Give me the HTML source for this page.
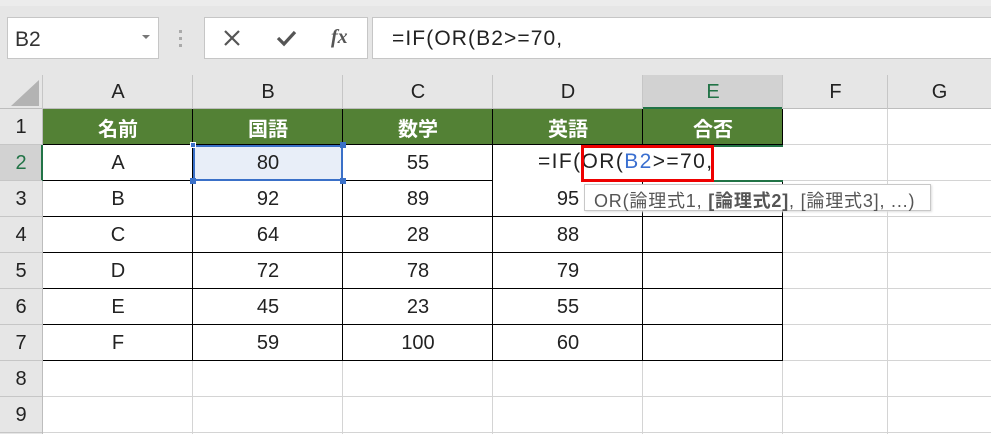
<!DOCTYPE html>
<html><head><meta charset="utf-8"><style>
*{margin:0;padding:0;box-sizing:border-box}
body{width:991px;height:434px;overflow:hidden;background:#fff;font-family:"Liberation Sans","Noto Sans CJK JP",sans-serif;position:relative}
.a{position:absolute}
.c{position:absolute;display:flex;align-items:center;justify-content:center;font-size:20px;color:#222}
.g{background:#d4d4d4}
.k{background:#000}
</style></head><body>
<div class="a" style="left:0;top:0;width:991px;height:75px;background:#e6e6e6"></div>
<div class="a" style="left:0;top:0;width:991px;height:6px;background:#ececec"></div>
<div class="a" style="left:7px;top:17px;width:152px;height:42px;background:#fff;border:1px solid #c6c6c6"></div>
<div class="a" style="left:15px;top:28px;font-size:21px;color:#333">B2</div>
<div class="a" style="left:142px;top:35px;width:0;height:0;border-left:4px solid transparent;border-right:4px solid transparent;border-top:4px solid #777"></div>
<div class="a" style="left:179px;top:30px;width:3px;height:3px;background:#aaa;box-shadow:0 7px 0 #aaa,0 14px 0 #aaa"></div>
<div class="a" style="left:204px;top:17px;width:164px;height:42px;background:#fff;border:1px solid #c6c6c6"></div>
<svg class="a" style="left:222px;top:28px" width="20" height="20"><path d="M3 3L17 17M17 3L3 17" stroke="#555" stroke-width="2.2"/></svg>
<svg class="a" style="left:275px;top:28px" width="24" height="20"><path d="M3 10L9 16L20 4" stroke="#555" stroke-width="3.2" fill="none"/></svg>
<div class="a" style="left:331px;top:26px;font-family:'Liberation Serif',serif;font-style:italic;font-size:20px;color:#555;font-weight:bold">fx</div>
<div class="a" style="left:372px;top:17px;width:619px;height:42px;background:#fff;border:1px solid #c6c6c6;border-right:none"></div>
<div class="a" style="left:392px;top:27px;font-size:21px;color:#222;letter-spacing:1.1px">=IF(OR(B2&gt;=70,</div>
<!-- column headers -->
<div class="a" style="left:0;top:75px;width:991px;height:34px;background:#e6e6e6;border-bottom:1px solid #bdbdbd"></div>
<svg class="a" style="left:10px;top:79px" width="30" height="28"><path d="M29 1V27H1Z" fill="#b3b3b3"/></svg>
<div class="a" style="left:643px;top:75px;width:140px;height:34px;background:#d2d2d2;border-bottom:2px solid #217346"></div>
<div class="c" style="left:43px;top:75px;width:150px;height:34px">A</div>
<div class="c" style="left:193px;top:75px;width:150px;height:34px">B</div>
<div class="c" style="left:343px;top:75px;width:150px;height:34px">C</div>
<div class="c" style="left:493px;top:75px;width:150px;height:34px">D</div>
<div class="c" style="left:643px;top:75px;width:140px;height:34px;color:#217346">E</div>
<div class="c" style="left:783px;top:75px;width:105px;height:34px">F</div>
<div class="c" style="left:888px;top:75px;width:103px;height:34px">G</div>
<div class="a" style="left:42px;top:75px;width:1px;height:34px;background:#c6c6c6"></div>
<div class="a" style="left:192px;top:75px;width:1px;height:34px;background:#c6c6c6"></div>
<div class="a" style="left:342px;top:75px;width:1px;height:34px;background:#c6c6c6"></div>
<div class="a" style="left:492px;top:75px;width:1px;height:34px;background:#c6c6c6"></div>
<div class="a" style="left:642px;top:75px;width:1px;height:34px;background:#c6c6c6"></div>
<div class="a" style="left:782px;top:75px;width:1px;height:34px;background:#c6c6c6"></div>
<div class="a" style="left:887px;top:75px;width:1px;height:34px;background:#c6c6c6"></div>
<!-- row headers -->
<div class="a" style="left:0;top:109px;width:43px;height:325px;background:#e6e6e6;border-right:1px solid #bdbdbd"></div>
<div class="a" style="left:0;top:145px;width:43px;height:36px;background:#d2d2d2;border-right:2px solid #217346"></div>
<div class="c" style="left:0;top:109px;width:42px;height:36px">1</div>
<div class="c" style="left:0;top:145px;width:42px;height:36px;color:#217346">2</div>
<div class="c" style="left:0;top:181px;width:42px;height:36px">3</div>
<div class="c" style="left:0;top:217px;width:42px;height:36px">4</div>
<div class="c" style="left:0;top:253px;width:42px;height:36px">5</div>
<div class="c" style="left:0;top:289px;width:42px;height:36px">6</div>
<div class="c" style="left:0;top:325px;width:42px;height:36px">7</div>
<div class="c" style="left:0;top:361px;width:42px;height:36px">8</div>
<div class="c" style="left:0;top:397px;width:42px;height:36px">9</div>
<div class="a" style="left:0;top:144px;width:42px;height:1px;background:#c6c6c6;box-shadow:0 36px 0 #c6c6c6,0 72px 0 #c6c6c6,0 108px 0 #c6c6c6,0 144px 0 #c6c6c6,0 180px 0 #c6c6c6,0 216px 0 #c6c6c6,0 252px 0 #c6c6c6,0 288px 0 #c6c6c6"></div>
<!-- gridlines grey -->
<div class="a g" style="left:43px;top:396px;width:948px;height:1px;box-shadow:0 36px 0 #d4d4d4"></div>
<div class="a g" style="left:783px;top:144px;width:208px;height:1px;box-shadow:0 36px 0 #d4d4d4,0 72px 0 #d4d4d4,0 108px 0 #d4d4d4,0 144px 0 #d4d4d4,0 180px 0 #d4d4d4,0 216px 0 #d4d4d4"></div>
<div class="a g" style="left:192px;top:361px;width:1px;height:73px;box-shadow:150px 0 0 #d4d4d4,300px 0 0 #d4d4d4,450px 0 0 #d4d4d4,590px 0 0 #d4d4d4"></div>
<div class="a g" style="left:887px;top:109px;width:1px;height:325px"></div>
<!-- header row green -->
<div class="a" style="left:43px;top:109px;width:740px;height:36px;background:#538135"></div>
<!-- black borders -->
<div class="a k" style="left:43px;top:144px;width:740px;height:1px;box-shadow:0 36px 0 #000,0 72px 0 #000,0 108px 0 #000,0 144px 0 #000,0 180px 0 #000,0 216px 0 #000"></div>
<div class="a k" style="left:192px;top:109px;width:1px;height:252px;box-shadow:150px 0 0 #000,300px 0 0 #000,450px 0 0 #000,590px 0 0 #000"></div>
<!-- header texts -->
<div class="c" style="left:43px;top:109px;width:150px;height:36px;color:#fff;font-weight:bold">名前</div>
<div class="c" style="left:193px;top:109px;width:150px;height:36px;color:#fff;font-weight:bold">国語</div>
<div class="c" style="left:343px;top:109px;width:150px;height:36px;color:#fff;font-weight:bold">数学</div>
<div class="c" style="left:493px;top:109px;width:150px;height:36px;color:#fff;font-weight:bold">英語</div>
<div class="c" style="left:643px;top:109px;width:140px;height:36px;color:#fff;font-weight:bold">合否</div>
<!-- B2 selection -->
<div class="a" style="left:193px;top:145px;width:150px;height:36px;background:#e8eef8;border:2px solid #3a70c8"></div>
<div class="a" style="left:190px;top:142px;width:6px;height:6px;background:#3a70c8;border:1px solid #fff;box-shadow:150px 0 0 #3a70c8,0 36px 0 #3a70c8,150px 36px 0 #3a70c8"></div>
<!-- edit cell D2 overflow -->
<div class="a" style="left:493px;top:145px;width:290px;height:36px;background:#fff"></div>
<div class="a" style="left:643px;top:145px;width:140px;height:2px;background:#217346"></div>
<div class="a" style="left:643px;top:180px;width:140px;height:2px;background:#217346"></div>
<div class="a" style="left:538px;top:150px;font-size:21px;color:#222;white-space:nowrap;letter-spacing:1.4px">=IF(OR(<span style="color:#3a6fd0">B2</span>&gt;=70,</div>
<div class="a" style="left:581px;top:145px;width:133px;height:37px;border:3px solid #e00"></div>
<!-- data -->
<div class="c" style="left:43px;top:145px;width:150px;height:36px">A</div>
<div class="c" style="left:193px;top:145px;width:150px;height:36px">80</div>
<div class="c" style="left:343px;top:145px;width:150px;height:36px">55</div>
<div class="c" style="left:43px;top:181px;width:150px;height:36px">B</div><div class="c" style="left:193px;top:181px;width:150px;height:36px">92</div><div class="c" style="left:343px;top:181px;width:150px;height:36px">89</div><div class="c" style="left:493px;top:181px;width:150px;height:36px">95</div>
<div class="c" style="left:43px;top:217px;width:150px;height:36px">C</div><div class="c" style="left:193px;top:217px;width:150px;height:36px">64</div><div class="c" style="left:343px;top:217px;width:150px;height:36px">28</div><div class="c" style="left:493px;top:217px;width:150px;height:36px">88</div>
<div class="c" style="left:43px;top:253px;width:150px;height:36px">D</div><div class="c" style="left:193px;top:253px;width:150px;height:36px">72</div><div class="c" style="left:343px;top:253px;width:150px;height:36px">78</div><div class="c" style="left:493px;top:253px;width:150px;height:36px">79</div>
<div class="c" style="left:43px;top:289px;width:150px;height:36px">E</div><div class="c" style="left:193px;top:289px;width:150px;height:36px">45</div><div class="c" style="left:343px;top:289px;width:150px;height:36px">23</div><div class="c" style="left:493px;top:289px;width:150px;height:36px">55</div>
<div class="c" style="left:43px;top:325px;width:150px;height:36px">F</div><div class="c" style="left:193px;top:325px;width:150px;height:36px">59</div><div class="c" style="left:343px;top:325px;width:150px;height:36px">100</div><div class="c" style="left:493px;top:325px;width:150px;height:36px">60</div>
<!-- tooltip -->
<div class="a" style="left:584px;top:184px;width:347px;height:27px;background:#fff;border:1px solid #c8c8c8;box-shadow:1px 1px 2px #ddd;font-size:18px;color:#555;padding:2px 0 0 9px;white-space:nowrap;letter-spacing:0.8px">OR(論理式1, <b>[論理式2]</b>, [論理式3], ...)</div>
</body></html>
